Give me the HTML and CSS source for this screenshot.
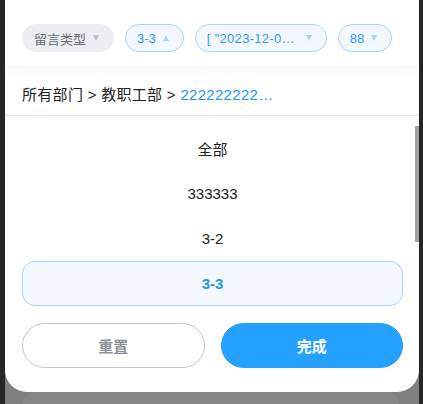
FILE: index.html
```html
<!DOCTYPE html>
<html lang="zh">
<head>
<meta charset="utf-8">
<link rel="stylesheet" href="styles.css">
</head>
<body>
<div class="screen">
  <div class="panel">
    <div class="filters">
      <div class="chip chip-gray"><span class="chip-text">留言类型</span><span class="tri down"></span></div>
      <div class="chip chip-blue"><span class="chip-text">3-3</span><span class="tri up"></span></div>
      <div class="chip chip-blue"><span class="chip-text chip-long">[ "2023-12-0…</span><span class="tri down"></span></div>
      <div class="chip chip-blue"><span class="chip-text">88</span><span class="tri down"></span></div>
    </div>
    <div class="crumbs">所有部门 &gt; 教职工部 &gt; <span class="crumb-cur">222222222…</span></div>
    <div class="list">
      <div class="item">全部</div>
      <div class="item">333333</div>
      <div class="item">3-2</div>
      <div class="item item-sel">3-3</div>
      <div class="item">3-4</div>
      <div class="scrollbar"></div>
    </div>
    <div class="footer">
      <button class="btn btn-reset">重置</button>
      <button class="btn btn-done">完成</button>
    </div>
  </div>
  <div class="under"><div class="under-card"></div></div>
</div>
</body>
</html>
```
FILE: styles.css
```css
html, body {
  margin: 0;
  padding: 0;
}
body {
  background: #262626;
  font-family: "Liberation Sans", "Noto Sans CJK SC", sans-serif;
  width: 423px;
  height: 404px;
  overflow: hidden;
}
.screen {
  margin-left: 5px;
  width: 414px;
  height: 404px;
  background: #7f7f7f;
  display: flex;
  flex-direction: column;
}
.panel {
  background: #fff;
  height: 392px;
  border-radius: 0 0 22px 22px;
  display: flex;
  flex-direction: column;
  overflow: hidden;
  flex-shrink: 0;
}
.filters {
  height: 66px;
  box-sizing: border-box;
  padding: 24px 0 0 17px;
  display: flex;
  gap: 11px;
  align-items: flex-start;
  box-shadow: 0 6px 14px rgba(0, 0, 0, 0.035);
  position: relative;
  z-index: 1;
}
.chip {
  height: 28px;
  box-sizing: border-box;
  border-radius: 14px;
  display: flex;
  align-items: center;
  padding: 0 14px 0 11px;
  gap: 7px;
  font-size: 13px;
  white-space: nowrap;
}
.chip-gray {
  background: #eceef3;
  color: #676a70;
  border: 1px solid #eceef3;
}
.chip-blue {
  background: #f3f8ff;
  color: #2f9bf5;
  border: 1px solid #a9d5fb;
}
.chip-long {
  width: 92px;
  letter-spacing: 0.3px;
}
.tri {
  width: 0;
  height: 0;
  border-left: 3.5px solid transparent;
  border-right: 3.5px solid transparent;
}
.tri.down {
  border-top: 6px solid #b9bcc4;
}
.chip-blue .tri.down {
  border-top-color: #a9d5fb;
}
.tri.up {
  border-bottom: 6px solid #a9d5fb;
}
.crumbs {
  height: 50px;
  box-sizing: border-box;
  padding: 17px 0 0 17px;
  font-size: 15px;
  color: #222;
  border-bottom: 1px solid #e6e6ee;
  white-space: nowrap;
  letter-spacing: 0.3px;
}
.crumb-cur {
  color: #2196f3;
}
.list {
  height: 207px;
  box-sizing: border-box;
  padding: 10px 16px 0 17px;
  overflow: hidden;
  position: relative;
  flex-shrink: 0;
}
.item {
  height: 45px;
  display: flex;
  align-items: center;
  justify-content: center;
  font-size: 15px;
  color: #222;
  box-sizing: border-box;
}
.item-sel {
  border: 1px solid #a9d5fb;
  background: #f3f8ff;
  border-radius: 13px;
  color: #2196f3;
  font-weight: bold;
}
.scrollbar {
  position: absolute;
  right: 0;
  top: 10px;
  width: 4px;
  height: 116px;
  background: #a2a2a2;
}
.footer {
  display: flex;
  gap: 16px;
  padding: 0 16px 0 17px;
  background: #fff;
  position: relative;
}
.btn {
  flex: 1;
  height: 45px;
  border-radius: 23px;
  font-family: inherit;
  font-size: 15px;
  font-weight: bold;
  cursor: pointer;
}
.btn-reset {
  background: #fff;
  border: 1px solid #c4c7cd;
  color: #8d9097;
}
.btn-done {
  background: #24a0ff;
  border: 1px solid #24a0ff;
  color: #fff;
}
.under {
  flex: 1;
  padding: 0 20px 0 18px;
}
.under-card {
  height: 100%;
  border-radius: 12px 12px 0 0;
  background: #858585;
}
```
